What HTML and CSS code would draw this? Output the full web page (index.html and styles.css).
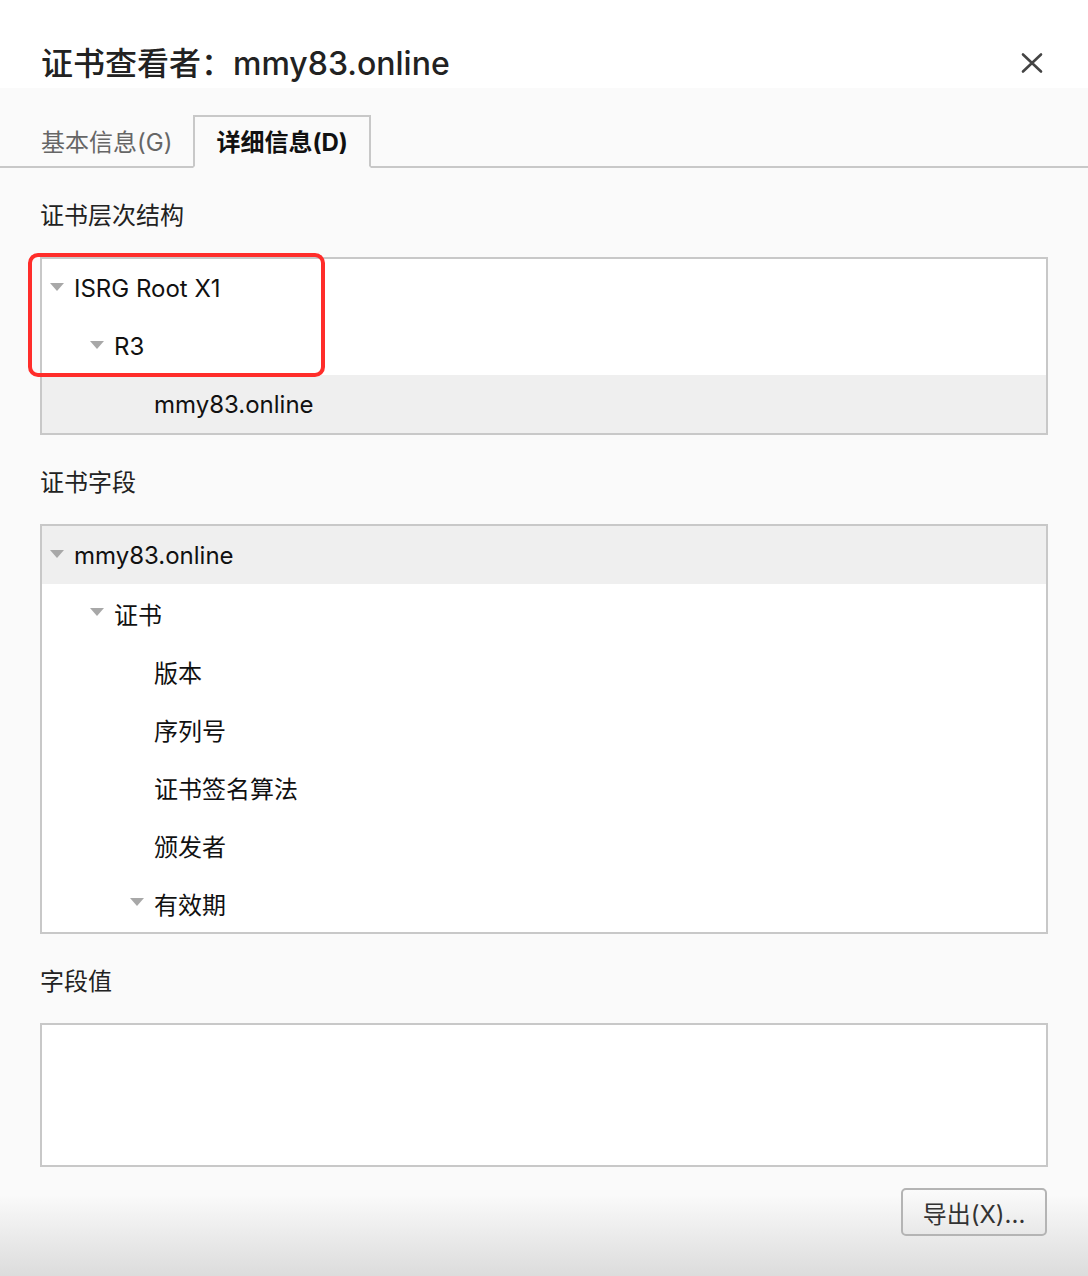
FILE: index.html
```html
<!DOCTYPE html>
<html lang="zh-CN">
<head>
    <meta charset="UTF-8">
    <title>证书查看者：mmy83.online</title>
    <link rel="stylesheet" href="styles.css">
</head>
<body>
    <div class="dialog">
        <header class="title-bar">
            <h1>证书查看者：mmy83.online</h1>
            <button class="close-btn" aria-label="关闭">
                <svg width="24" height="24" viewBox="0 0 24 24"><path d="M3 3.5 L21 20.5 M21 3.5 L3 20.5" stroke="#444" stroke-width="2.6" stroke-linecap="round"/></svg>
            </button>
        </header>

        <div class="tabs">
            <div class="tab">基本信息(G)</div>
            <div class="tab active">详细信息(D)</div>
        </div>

        <div class="content">
            <div class="section-label">证书层次结构</div>
            <div class="tree-box hierarchy">
                <div class="highlight"></div>
                <div class="row level-0"><span class="twisty"></span>ISRG Root X1</div>
                <div class="row level-1"><span class="twisty"></span>R3</div>
                <div class="row level-2 selected">mmy83.online</div>
            </div>

            <div class="section-label">证书字段</div>
            <div class="tree-box">
                <div class="row level-0 selected"><span class="twisty"></span>mmy83.online</div>
                <div class="row level-1"><span class="twisty"></span>证书</div>
                <div class="row level-2">版本</div>
                <div class="row level-2">序列号</div>
                <div class="row level-2">证书签名算法</div>
                <div class="row level-2">颁发者</div>
                <div class="row level-2 with-twisty"><span class="twisty"></span>有效期</div>
            </div>

            <div class="section-label">字段值</div>
            <div class="value-box"></div>

            <div class="actions">
                <button class="btn">导出(X)...</button>
            </div>
        </div>
    </div>
</body>
</html>
```

FILE: styles.css
```css
body {
    margin: 0;
    padding: 0;
    font-family: "Inter", "Noto Sans CJK SC", sans-serif;
    color: #222;
    background: #fafafa;
}
.dialog {
    width: 1088px;
    height: 1276px;
    display: flex;
    flex-direction: column;
    background: linear-gradient(to bottom, #fafafa 0, #fafafa 1195px, #dcdcdc 1276px);
}
.title-bar {
    height: 88px;
    background: white;
    display: flex;
    align-items: center;
    justify-content: space-between;
    padding: 40px 44px 0 41px;
    box-sizing: border-box;
}
.title-bar h1 {
    margin: 0;
    font-size: 32px;
    font-weight: 500;
    color: #222;
    line-height: 48px;
}
.close-btn {
    border: none;
    background: none;
    padding: 0;
    margin-top: -2px;
    cursor: pointer;
    display: flex;
}
.tabs {
    display: flex;
    align-items: flex-end;
    height: 80px;
    padding-left: 20px;
    box-sizing: border-box;
    border-bottom: 2px solid #c8c8c8;
}
.tab {
    font-size: 24px;
    color: #666;
    padding: 0 21px;
    height: 50px;
    line-height: 50px;
    margin-bottom: -2px;
}
.tab.active {
    color: #111;
    font-weight: bold;
    border: 2px solid #c8c8c8;
    border-bottom: 2px solid #fafafa;
    background: #fafafa;
    height: 49px;
    line-height: 51px;
}
.content {
    padding: 0 40px;
    flex: 1;
    display: flex;
    flex-direction: column;
}
.section-label {
    font-size: 24px;
    margin-top: 32px;
    margin-bottom: 25px;
    line-height: 32px;
}
.tree-box {
    position: relative;
    background: white;
    border: 2px solid #c8c8c8;
}
.row {
    height: 58px;
    font-size: 24px;
    display: flex;
    align-items: center;
    color: #111;
}
.row.selected {
    background: #efefef;
}
.level-0 { padding-left: 8px; }
.level-1 { padding-left: 48px; }
.level-2 { padding-left: 112px; }
.level-2.with-twisty { padding-left: 88px; }
.twisty {
    width: 0;
    height: 0;
    border-left: 7px solid transparent;
    border-right: 7px solid transparent;
    border-top: 8px solid #a8a8a8;
    margin-right: 10px;
    margin-top: -3px;
}
.highlight {
    position: absolute;
    left: -14px;
    top: -6px;
    width: 289px;
    height: 116px;
    border: 4px solid #ff2d2a;
    border-radius: 10px;
    pointer-events: none;
}
.value-box {
    background: white;
    border: 2px solid #c8c8c8;
    height: 140px;
}
.actions {
    display: flex;
    justify-content: flex-end;
    margin-top: 21px;
    padding-right: 1px;
}
.btn {
    font-family: "Inter", "Noto Sans CJK SC", sans-serif;
    font-size: 24px;
    color: #333;
    width: 146px;
    height: 48px;
    border: 2px solid #b4b4b4;
    border-radius: 5px;
    background: linear-gradient(to bottom, #fbfbfb, #e8e8e8);
    cursor: pointer;
}
```
